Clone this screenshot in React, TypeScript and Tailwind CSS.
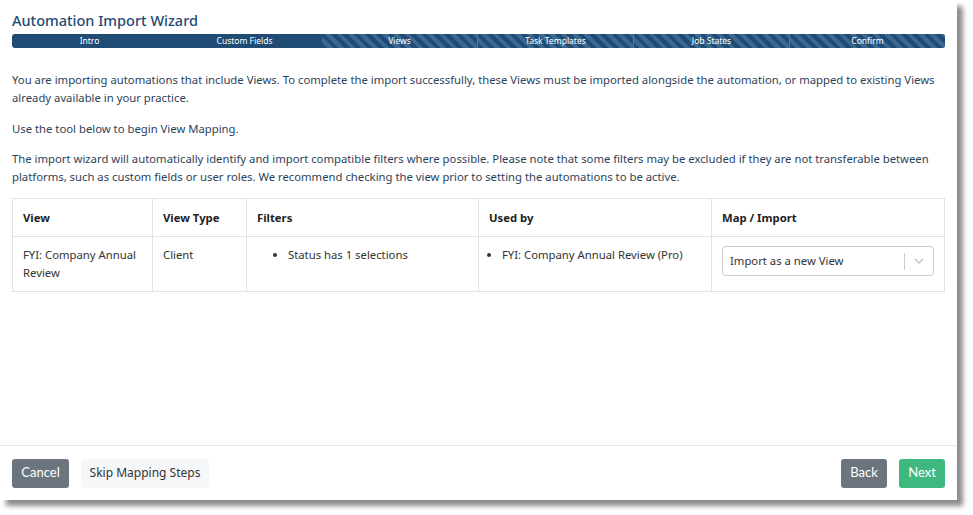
import React from "react";

const steps = ["Intro", "Custom Fields", "Views", "Task Templates", "Job States", "Confirm"];

export default function App() {
  return (
    <div className="w-[973px] h-[515px] bg-white" style={{ fontFamily: '"Noto Sans", "Open Sans", sans-serif' }}>
      <div className="w-[957px] h-[500px] bg-white rounded-tr-[3px] shadow-[6px_6px_5px_rgba(0,0,0,0.45)] flex flex-col">
        <div className="px-3 pt-[10px]">
          <h1 className="text-[14.5px] leading-[20px] font-medium text-[#1d4a73]">Automation Import Wizard</h1>
          <div className="mt-[4px] h-[14px] flex rounded-[3px] overflow-hidden bg-[#1f4b74]">
            {steps.map((s, i) => (
              <div
                key={s}
                className={
                  "flex-1 flex items-center justify-center text-[8.5px] leading-none text-white " +
                  (i >= 2
                    ? "bg-[repeating-linear-gradient(45deg,#1f4b74_0px,#1f4b74_4px,#3a6890_4px,#3a6890_8px)] "
                    : "") +
                  (i >= 3 ? "border-l border-[#4f78a0]" : "")
                }
              >
                {s}
              </div>
            ))}
          </div>
        </div>

        <div className="px-3 pt-[23px] text-[11.3px] leading-[18px] text-[#2d4359] flex-1">
          <p>
            You are importing automations that include Views. To complete the import successfully, these Views must be imported alongside the automation, or mapped to existing Views already available in your practice.
          </p>
          <p className="mt-[13px]">Use the tool below to begin View Mapping.</p>
          <p className="mt-[12px]">
            The import wizard will automatically identify and import compatible filters where possible. Please note that some filters may be excluded if they are not transferable between platforms, such as custom fields or user roles. We recommend checking the view prior to setting the automations to be active.
          </p>

          <table className="mt-[12px] w-full border-collapse text-[11.3px] leading-[18px] text-[#333]">
            <thead>
              <tr className="h-[38px]">
                <th className="w-[140px] border border-[#dfe3e8] px-[10px] text-left font-bold text-[#222]">View</th>
                <th className="w-[94px] border border-[#dfe3e8] px-[10px] text-left font-bold text-[#222]">View Type</th>
                <th className="w-[232px] border border-[#dfe3e8] px-[10px] text-left font-bold text-[#222]">Filters</th>
                <th className="w-[233px] border border-[#dfe3e8] px-[10px] text-left font-bold text-[#222]">Used by</th>
                <th className="border border-[#dfe3e8] px-[10px] text-left font-bold text-[#222]">Map / Import</th>
              </tr>
            </thead>
            <tbody>
              <tr className="h-[54px]">
                <td className="border border-[#dfe3e8] px-[10px] pt-[9px] pb-[9px] align-top">FYI: Company Annual Review</td>
                <td className="border border-[#dfe3e8] px-[10px] pt-[9px] align-top">Client</td>
                <td className="border border-[#dfe3e8] px-[10px] pt-[9px] align-top">
                  <ul className="list-disc pl-[31px]">
                    <li>Status has 1 selections</li>
                  </ul>
                </td>
                <td className="border border-[#dfe3e8] px-[10px] pt-[9px] align-top">
                  <ul className="list-disc pl-[13px]">
                    <li>FYI: Company Annual Review (Pro)</li>
                  </ul>
                </td>
                <td className="border border-[#dfe3e8] px-[10px] pt-[9px] align-top">
                  <div className="h-[30px] flex items-center border border-[#ccc] rounded-[4px] bg-white">
                    <span className="flex-1 pl-[7px] text-[11.3px] text-[#333]">Import as a new View</span>
                    <span className="w-px h-[17px] bg-[#ccc]" />
                    <span className="w-[28px] flex items-center justify-center text-[#bbb]">
                      <svg width="10" height="6" viewBox="0 0 10 6" fill="none">
                        <path d="M1 1l4 4 4-4" stroke="#bbb" strokeWidth="1.2" />
                      </svg>
                    </span>
                  </div>
                </td>
              </tr>
            </tbody>
          </table>
        </div>

        <div className="border-t border-[#e5e8ec] h-[55px] px-3 flex items-center gap-3 text-[12px]">
          <button className="h-[29px] w-[57px] rounded-[3px] bg-[#6c757d] text-white text-[13px]" style={{ fontFamily: 'Lato, sans-serif' }}>Cancel</button>
          <button className="h-[29px] w-[128px] rounded-[3px] bg-[#f6f7f9] text-[#333] text-[12px]">Skip Mapping Steps</button>
          <div className="flex-1" />
          <button className="h-[29px] w-[46px] rounded-[3px] bg-[#6c757d] text-white text-[13px]" style={{ fontFamily: 'Lato, sans-serif' }}>Back</button>
          <button className="h-[29px] w-[46px] rounded-[3px] bg-[#3fb87f] text-white text-[13px]" style={{ fontFamily: 'Lato, sans-serif' }}>Next</button>
        </div>
      </div>
    </div>
  );
}
